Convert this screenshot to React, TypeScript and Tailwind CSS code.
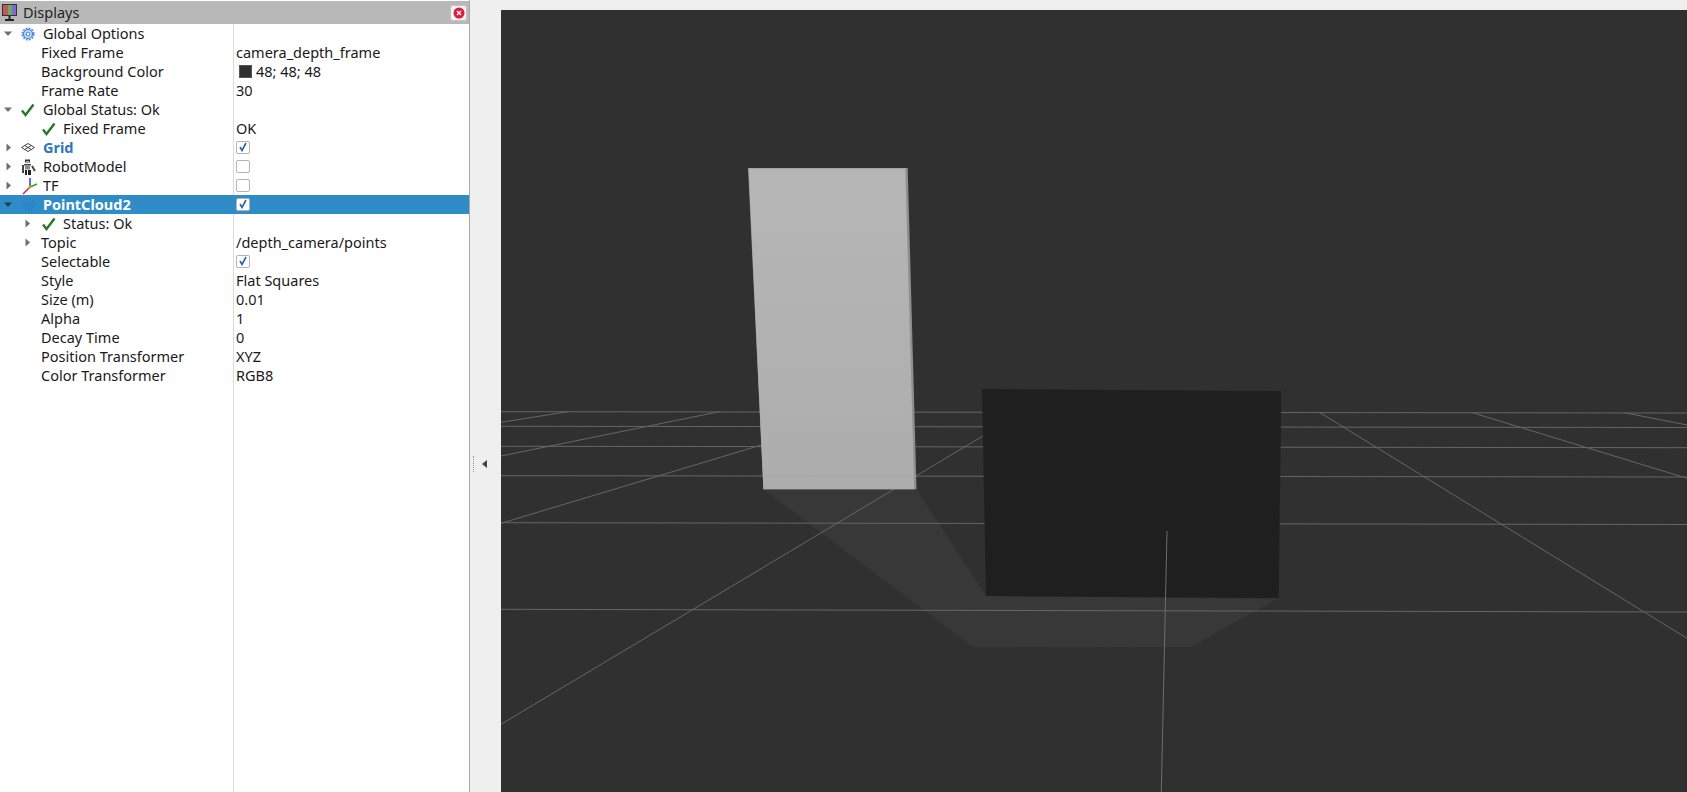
import type { ReactNode } from "react";

const Arrow = ({ open, dark }: { open?: boolean; dark?: boolean }) => (
  <svg width="11" height="11" viewBox="0 0 11 11" className="shrink-0">
    {open ? (
      <path d="M1 3.5h8L5 8z" fill={dark ? "#1f3f5a" : "#6f6f6f"} />
    ) : (
      <path d="M3.5 1.5v8L8 5.5z" fill="#6f6f6f" />
    )}
  </svg>
);

const Check = () => (
  <svg width="14" height="14" viewBox="0 0 14 14" className="shrink-0">
    <path d="M1 7.5l3.5 4.5L12.5 1.5" fill="none" stroke="#257a25" strokeWidth="2.4" />
  </svg>
);

const Gear = () => (
  <svg width="14" height="14" viewBox="0 0 14 14" className="shrink-0">
    <circle cx="7" cy="7" r="4.5" fill="#c9dcf5" stroke="#3f7fd0" strokeWidth="1.2" />
    <circle cx="7" cy="7" r="5.8" fill="none" stroke="#4f8cdc" strokeWidth="1.6" strokeDasharray="1.8 1.24" />
    <circle cx="7" cy="7" r="1.9" fill="#fff" stroke="#3f7fd0" />
  </svg>
);

const GridIcon = () => (
  <svg width="14" height="9" viewBox="0 0 14 9" className="shrink-0">
    <path d="M7 .5l6.5 4L7 8.5.5 4.5zM3.7 2.5l6.5 4M10.3 2.5l-6.5 4" fill="none" stroke="#444" strokeWidth="1" />
  </svg>
);

const RobotIcon = () => (
  <svg width="16" height="16" viewBox="0 0 16 16" className="shrink-0">
    <rect x="4" y="0.5" width="5" height="3" fill="#333" />
    <rect x="5" y="2" width="3" height="1" fill="#bbb" />
    <rect x="3" y="5" width="7" height="1.5" fill="#444" />
    <rect x="4" y="6.5" width="5" height="4" fill="#8a8a8a" />
    <path d="M2 6v8M11 7l3 5" stroke="#444" strokeWidth="2" />
    <path d="M4 11v5h2v-5M7 11v5h3v-5" fill="#222" />
  </svg>
);

const TfIcon = () => (
  <svg width="17" height="18" viewBox="0 0 17 18" className="shrink-0">
    <path d="M9 10V1" stroke="#2b2bd8" strokeWidth="1.4" />
    <path d="M9 10l7-3" stroke="#2aa02a" strokeWidth="1.4" />
    <path d="M9 10l-7 7" stroke="#d82222" strokeWidth="1.4" />
    <circle cx="9" cy="10" r="1.2" fill="#c8a020" />
  </svg>
);

const CloudIcon = () => (
  <svg width="15" height="15" viewBox="0 0 15 15" className="shrink-0">
    {[[2, 4], [5, 2], [8, 1], [11, 3], [4, 6], [7, 5], [10, 6], [13, 6], [2, 9], [5, 9], [8, 8], [11, 9], [4, 12], [7, 11], [10, 12], [7, 14]].map(([x, y]) => (
      <rect key={`${x}-${y}`} x={x} y={y} width="1.4" height="1.4" fill="#1f78d8" />
    ))}
  </svg>
);

const Checkbox = ({ checked }: { checked?: boolean }) => (
  <span className="mb-[1px] flex h-[13px] w-[14px] items-center justify-center rounded-[2px] border border-[#b4b4b4] bg-white">
    {checked && (
      <svg width="10" height="10" viewBox="0 0 10 10">
        <path d="M2 5l2 3.5L8 1" fill="none" stroke="#2a62a8" strokeWidth="1.6" />
      </svg>
    )}
  </span>
);

type RowProps = {
  arrow?: "open" | "closed";
  nested?: boolean;
  icon?: ReactNode;
  label: string;
  value?: ReactNode;
  selected?: boolean;
  blue?: boolean;
};

// label sits at x=41 for plain properties, x=43 for top-level items, x=63 for nested items
const Row = ({ arrow, nested, icon, label, value, selected, blue }: RowProps) => (
  <div className={`flex h-[19px] items-center ${selected ? "bg-[#308cc6] text-white" : ""}`}>
    <div className={`flex h-full w-[234px] shrink-0 items-center border-r ${selected ? "border-[#308cc6]" : "border-[#dcdcdc]"}`}>
      <span className={`flex shrink-0 justify-end ${nested ? "w-[33px]" : "w-[14px]"}`}>
        {arrow && <Arrow open={arrow === "open"} dark={selected} />}
      </span>
      {icon ? (
        <>
          <span className={`flex shrink-0 items-center justify-start ${nested ? "ml-[9px] w-[21px]" : "ml-[7px] w-[22px]"}`}>
            {icon}
          </span>
          <span className={`${selected || blue ? "font-bold" : ""} ${blue ? "text-[#2c75c0]" : ""}`}>{label}</span>
        </>
      ) : (
        <span className={nested ? "ml-[8px]" : "ml-[27px]"}>{label}</span>
      )}
    </div>
    <div className="flex min-w-0 flex-1 items-center pl-[2px]">{value}</div>
  </div>
);

const Swatch = () => (
  <span className="flex items-center">
    <span className="ml-[3px] mr-[4px] h-[13px] w-[13px] border border-[#555] bg-[#303030]" />
    48; 48; 48
  </span>
);

const Viewport = () => (
  <svg viewBox="501 10 1186 782" className="h-full w-full" preserveAspectRatio="none">
    <defs>
      <linearGradient id="wall" x1="0" y1="0" x2="0" y2="1">
        <stop offset="0" stopColor="#b6b6b6" />
        <stop offset="1" stopColor="#adadad" />
      </linearGradient>
    </defs>
    <rect x="501" y="10" width="1186" height="782" fill="#303030" />
    <polygon points="763.4,489.3 916.5,489.3 986,596 1277,598.7 1190.6,647 972.6,646.7" fill="#383838" />
    <g stroke="#666" strokeWidth="1" fill="none">
      <path d="M501 411.7L1687 413" />
      <path d="M501 426.3L1687 427.5" />
      <path d="M501 446.3L1687 447.7" />
      <path d="M501 475.7L1687 477" />
      <path d="M501 522.7L1687 524.5" />
      <path d="M501 609.3L1687 612" />
      <path d="M501 422.3L568 411.7" />
      <path d="M501 456L719.4 411.7" />
      <path d="M501 523.3L871 412" />
      <path d="M501 724.3L1023 412" />
      <path d="M1320 412.7L1687 638.3" />
      <path d="M1472.4 412.7L1687 478.3" />
      <path d="M1624.4 412.7L1687 425" />
    </g>
    <polygon points="748,168 907.7,168 916.5,489.3 763.4,489.3" fill="#8f8f8f" />
    <polygon points="748.6,168.6 905.3,168.6 914.2,489.3 763.4,489.3" fill="url(#wall)" />
    <polygon points="982,389 1281.3,391 1278.7,598 986,596" fill="#1f1f1f" />
    <path d="M1167 531L1161.3 792" stroke="#6e6e6e" strokeWidth="1" fill="none" />
    <path d="M763 475.7L916 476" stroke="#a6a6a6" strokeWidth="1" fill="none" />
  </svg>
);

export default function App() {
  return (
    <div className="flex h-[792px] w-[1687px] overflow-hidden bg-[#efefef] font-['Noto_Sans',sans-serif] text-[14.5px] leading-[19px] text-[#1a1a1a]">
      <div className="flex w-[470px] shrink-0 flex-col border-r border-[#a8a8a8] bg-white">
        <div className="mt-px flex h-[23px] shrink-0 items-center bg-[#b8b8b8] pl-px">
          <svg width="18" height="19" viewBox="0 0 18 19" className="shrink-0">
            <rect x="1" y="1" width="15" height="12" fill="#333" />
            <rect x="2" y="2" width="5" height="10" fill="#c05a5a" />
            <rect x="7" y="2" width="4" height="10" fill="#6fa86f" />
            <rect x="11" y="2" width="4" height="10" fill="#7a6fc0" />
            <path d="M8.5 13v3M4 17h9" stroke="#222" strokeWidth="2" />
          </svg>
          <span className="ml-[4px] text-[#222]">Displays</span>
          <span className="ml-auto mr-[2px] flex h-[16px] w-[17px] items-center justify-center rounded-[3px] border border-[#c4c4c4] bg-[#f2f2f2]">
            <svg width="12" height="12" viewBox="0 0 12 12">
              <circle cx="6" cy="6" r="5.5" fill="#d81e3c" />
              <path d="M4 4l4 4M8 4l-4 4" stroke="#fff" strokeWidth="1.4" />
            </svg>
          </span>
        </div>
        <div className="flex min-h-0 flex-1 flex-col">
          <Row arrow="open" icon={<Gear />} label="Global Options" />
          <Row label="Fixed Frame" value="camera_depth_frame" />
          <Row label="Background Color" value={<Swatch />} />
          <Row label="Frame Rate" value="30" />
          <Row arrow="open" icon={<Check />} label="Global Status: Ok" />
          <Row nested icon={<Check />} label="Fixed Frame" value="OK" />
          <Row arrow="closed" icon={<GridIcon />} label="Grid" blue value={<Checkbox checked />} />
          <Row arrow="closed" icon={<RobotIcon />} label="RobotModel" value={<Checkbox />} />
          <Row arrow="closed" icon={<TfIcon />} label="TF" value={<Checkbox />} />
          <Row arrow="open" icon={<CloudIcon />} label="PointCloud2" selected value={<Checkbox checked />} />
          <Row arrow="closed" nested icon={<Check />} label="Status: Ok" />
          <Row arrow="closed" nested label="Topic" value="/depth_camera/points" />
          <Row label="Selectable" value={<Checkbox checked />} />
          <Row label="Style" value="Flat Squares" />
          <Row label="Size (m)" value="0.01" />
          <Row label="Alpha" value="1" />
          <Row label="Decay Time" value="0" />
          <Row label="Position Transformer" value="XYZ" />
          <Row label="Color Transformer" value="RGB8" />
          <div className="flex flex-1">
            <div className="w-[234px] border-r border-[#dcdcdc]" />
          </div>
        </div>
      </div>
      <div className="flex w-[31px] shrink-0 items-center">
        <div className="flex h-[16px] translate-y-[68px] items-center">
          <span className="ml-[3px] h-[16px] border-l border-dotted border-[#999]" />
          <svg width="6" height="8" viewBox="0 0 6 8" className="ml-[8px]">
            <path d="M5 0v8L0 4z" fill="#444" />
          </svg>
        </div>
      </div>
      <div className="mt-[10px] min-w-0 flex-1">
        <Viewport />
      </div>
    </div>
  );
}
